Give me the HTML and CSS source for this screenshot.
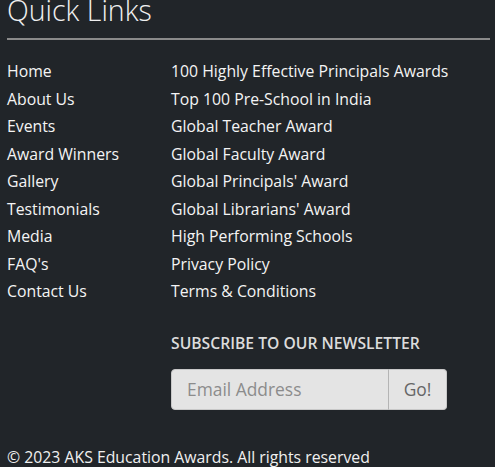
FILE: index.html
```html
<!DOCTYPE html>
<html lang="en">
<head>
    <meta charset="UTF-8">
    <meta name="viewport" content="width=device-width, initial-scale=1.0">
    <title>Quick Links</title>
    <link rel="stylesheet" href="styles.css">
</head>
<body>
    <div class="footer">
        <h2 class="title">Quick Links</h2>
        <hr class="divider">
        <div class="links">
            <ul class="list list-left">
                <li><a href="#">Home</a></li>
                <li><a href="#">About Us</a></li>
                <li><a href="#">Events</a></li>
                <li><a href="#">Award Winners</a></li>
                <li><a href="#">Gallery</a></li>
                <li><a href="#">Testimonials</a></li>
                <li><a href="#">Media</a></li>
                <li><a href="#">FAQ's</a></li>
                <li><a href="#">Contact Us</a></li>
            </ul>
            <div class="right">
                <ul class="list">
                    <li><a href="#">100 Highly Effective Principals Awards</a></li>
                    <li><a href="#">Top 100 Pre-School in India</a></li>
                    <li><a href="#">Global Teacher Award</a></li>
                    <li><a href="#">Global Faculty Award</a></li>
                    <li><a href="#">Global Principals' Award</a></li>
                    <li><a href="#">Global Librarians' Award</a></li>
                    <li><a href="#">High Performing Schools</a></li>
                    <li><a href="#">Privacy Policy</a></li>
                    <li><a href="#">Terms &amp; Conditions</a></li>
                </ul>
                <h3 class="subscribe">Subscribe to our newsletter</h3>
                <form class="newsletter" onsubmit="return false">
                    <input type="email" class="email" placeholder="Email Address">
                    <button class="go">Go!</button>
                </form>
            </div>
        </div>
        <p class="copy">&copy; 2023 AKS Education Awards. All rights reserved</p>
    </div>
</body>
</html>
```

FILE: styles.css
```css
html, body {
    margin: 0;
    background-color: #212529;
}
body {
    font-family: "Open Sans", sans-serif;
    color: #f0f0f0;
    overflow: hidden;
}
.footer {
    padding: 0 5px 0 7px;
    margin-top: -8px;
}
.title {
    font-size: 28.5px;
    font-weight: 300;
    margin: 0;
    line-height: 36px;
}
.divider {
    border: 0;
    border-top: 2px solid #8a8a8a;
    margin: 10px 0 18px 0;
}
.links {
    display: flex;
}
.list {
    list-style: none;
    margin: 0;
    padding: 0;
    font-size: 15.8px;
    line-height: 27.5px;
}
.list a {
    color: #f4f4f4;
    text-decoration: none;
}
.list-left {
    width: 164px;
}
.subscribe {
    font-size: 15.7px;
    font-weight: 600;
    text-transform: uppercase;
    color: #dcdcdc;
    margin: 26px 0 15px 0;
}
.newsletter {
    display: flex;
    width: 276px;
    height: 41px;
}
.email {
    flex: 1;
    min-width: 0;
    background-color: #e4e4e4;
    border: 1px solid #c8c8c8;
    border-radius: 4px 0 0 4px;
    padding: 0 15px;
    font-family: "Open Sans", sans-serif;
    font-size: 17.4px;
}
.email::placeholder {
    color: #8c8c8c;
}
.go {
    width: 59px;
    background-color: #e4e4e4;
    border: 1px solid #c8c8c8;
    border-left: 1px solid #b4b4b4;
    border-radius: 0 4px 4px 0;
    font-family: "Open Sans", sans-serif;
    font-size: 17.4px;
    color: #666;
    margin-left: -1px;
}
.copy {
    font-size: 15.8px;
    margin: 36px 0 0 0;
}
```
